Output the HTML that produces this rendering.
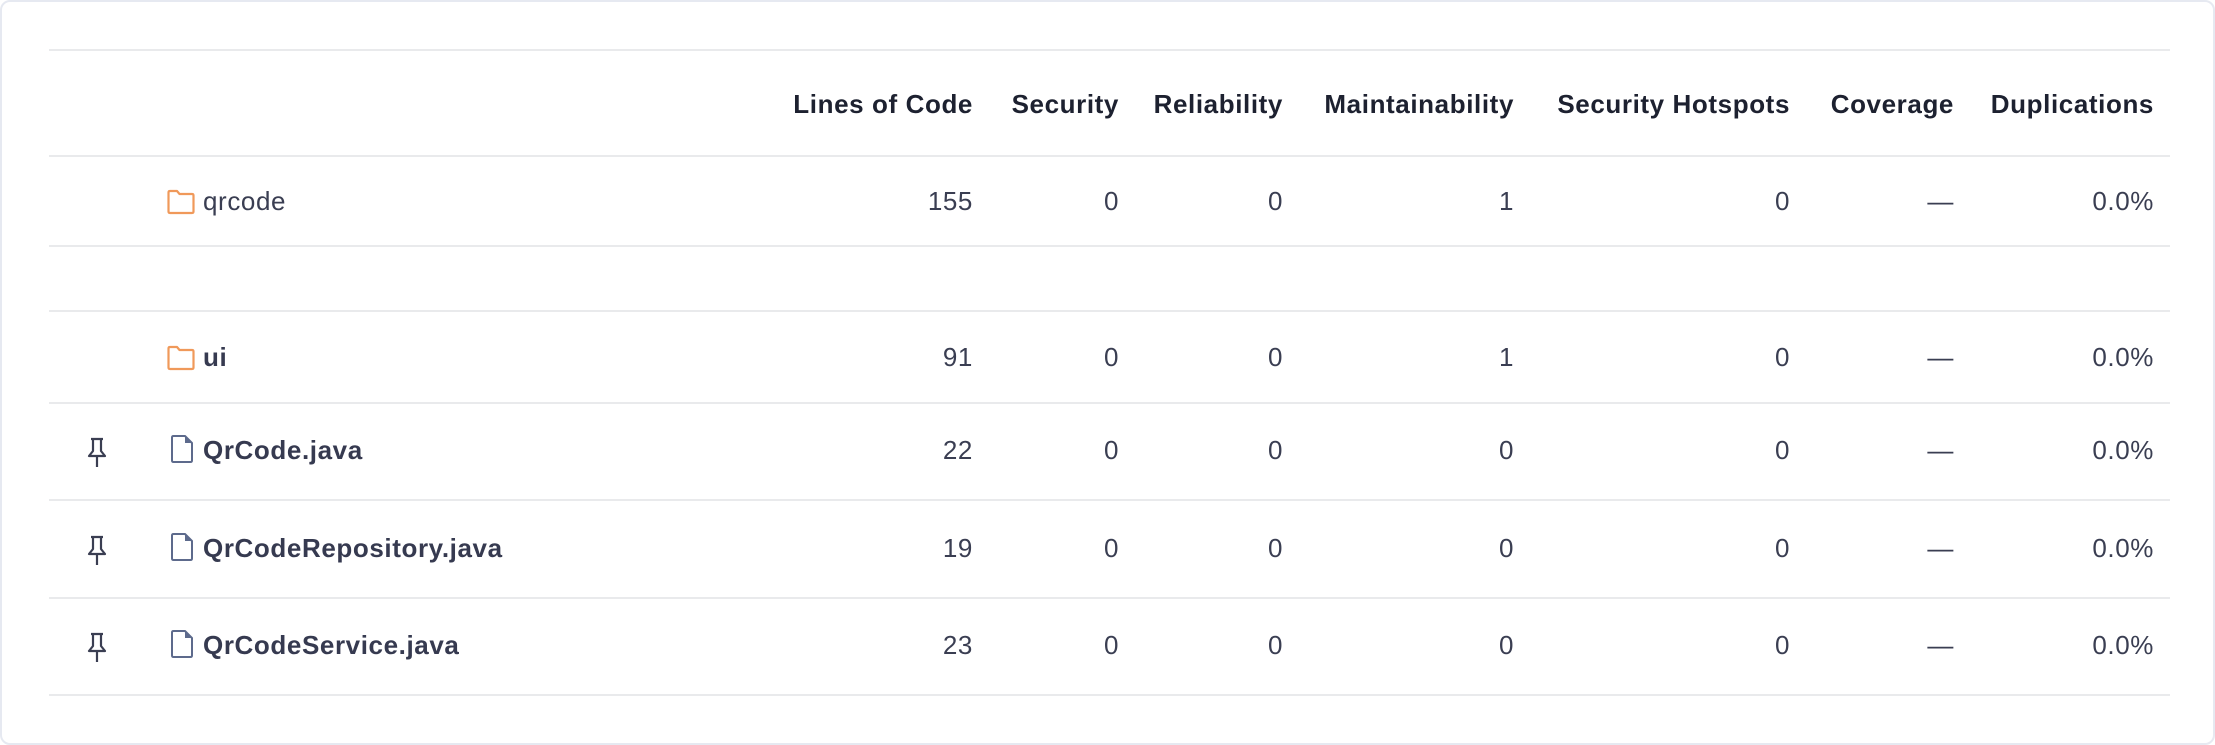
<!DOCTYPE html>
<html><head><meta charset="utf-8"><style>
html,body{margin:0;padding:0;background:#fff;}
body{width:2215px;height:745px;position:relative;overflow:hidden;font-family:"Liberation Sans",sans-serif;}
.card{position:absolute;left:0;top:0;width:2211px;height:741px;border:2px solid #e6e9f1;border-radius:10px;}
.ln{position:absolute;left:49px;width:2121px;height:2px;background:#e9eaec;}
.t{position:absolute;white-space:nowrap;transform:translateY(-50%);font-size:26px;line-height:30px;letter-spacing:0.6px;}
.h{font-weight:bold;color:#1d2130;}
.d{color:#3a3e52;}
.b{font-weight:bold;color:#363a50;}
svg{position:absolute;}
</style></head><body>
<div class="card"></div>
<div class="ln" style="top:49px"></div>
<div class="ln" style="top:155px"></div>
<div class="ln" style="top:245px"></div>
<div class="ln" style="top:310px"></div>
<div class="ln" style="top:402px"></div>
<div class="ln" style="top:499px"></div>
<div class="ln" style="top:597px"></div>
<div class="ln" style="top:694px"></div>

<div id="hdr"></div>
<script>
var cols=[973,1119,1283,1514,1790,1954,2154];
var heads=["Lines of Code","Security","Reliability","Maintainability","Security Hotspots","Coverage","Duplications"];
var h="";
heads.forEach(function(t,i){h+='<div class="t h" style="right:'+(2215-cols[i])+'px;top:104px">'+t+'</div>';});
var rows=[
 [201,"qrcode",0,false,["155","0","0","1","0","—","0.0%"]],
 [357,"ui",0,true,["91","0","0","1","0","—","0.0%"]],
 [450,"QrCode.java",1,true,["22","0","0","0","0","—","0.0%"]],
 [548,"QrCodeRepository.java",1,true,["19","0","0","0","0","—","0.0%"]],
 [645,"QrCodeService.java",1,true,["23","0","0","0","0","—","0.0%"]]
];
rows.forEach(function(r){
 var y=r[0];
 r[4].forEach(function(v,i){h+='<div class="t d" style="right:'+(2215-cols[i])+'px;top:'+y+'px">'+v+'</div>';});
 h+='<div class="t '+(r[3]?'b':'d')+'" style="left:203px;top:'+y+'px">'+r[1]+'</div>';
 if(r[2]==0){
  h+='<svg style="left:166px;top:'+(y-12)+'px" width="30" height="26" viewBox="0 0 30 26"><path d="M2.5 3.5 Q2.5 2 4 2 H11 L13.5 5 H26 Q27.5 5 27.5 6.5 V22.5 Q27.5 24 26 24 H4 Q2.5 24 2.5 22.5 Z" fill="none" stroke="#f0995a" stroke-width="2.2" stroke-linejoin="round"/></svg>';
 }else{
  h+='<svg style="left:169px;top:'+(y-16)+'px" width="26" height="30" viewBox="0 0 26 30"><path d="M3 3.5 Q3 2 4.5 2 H16 L23 9 V26.5 Q23 28 21.5 28 H4.5 Q3 28 3 26.5 Z" fill="none" stroke="#5d6a8c" stroke-width="2" stroke-linejoin="round"/><path d="M16 2 V9 H23 Z" fill="#5d6a8c"/></svg>';
  h+='<svg style="left:86px;top:'+(y-13)+'px" width="22" height="32" viewBox="0 0 22 32"><path d="M5 2 H17 M7 2 V14 L3 19 H19 L15 14 V2 M11 19 V30" fill="none" stroke="#3a3e52" stroke-width="2.2" stroke-linejoin="round"/></svg>';
 }
});
document.getElementById("hdr").innerHTML=h;
</script>
</body></html>
